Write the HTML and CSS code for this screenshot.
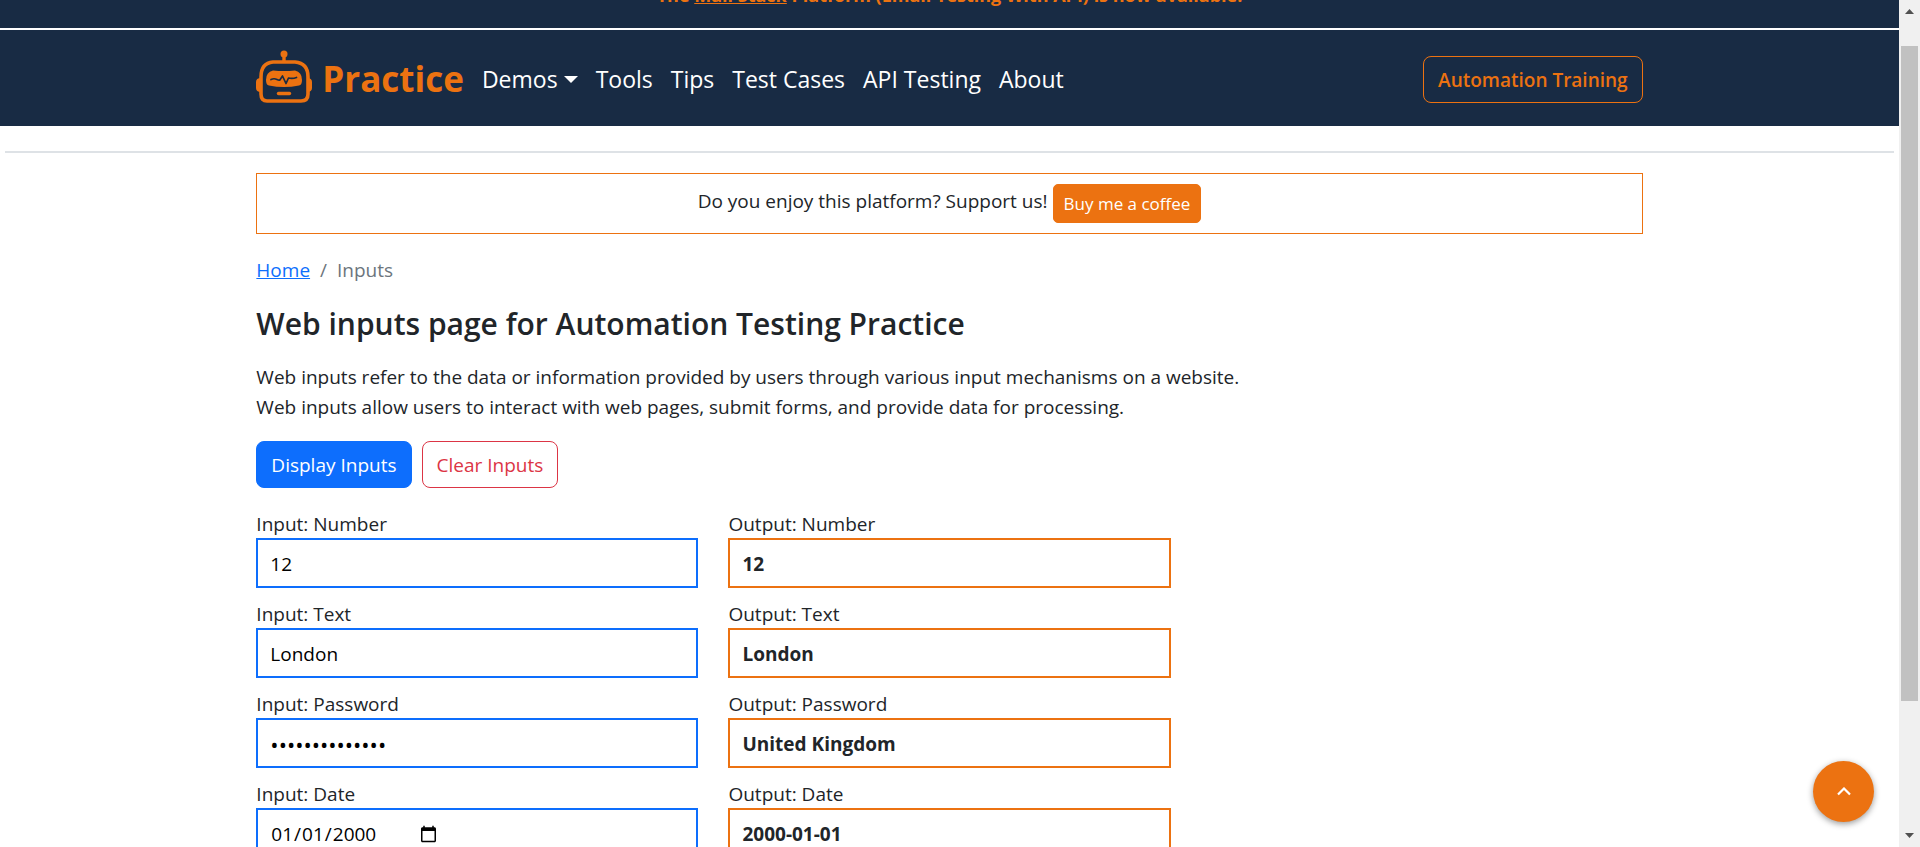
FILE: index.html
```html
<!DOCTYPE html>
<html lang="en">
<head>
<meta charset="utf-8">
<meta name="viewport" content="width=device-width, initial-scale=1">
<title>Web inputs page for Automation Testing Practice</title>
<link rel="stylesheet" href="styles.css">
</head>
<body>
<div class="window">
  <div class="page">
    <div class="banner">
      <p class="banner-text">The <a href="#">Mail Stack</a> Platform (Email Testing With API) is now available!</p>
    </div>
    <header class="navbar">
      <div class="container navbar-inner">
        <a class="brand" href="#">
          <svg class="brand-icon" viewBox="0 0 56 54" aria-hidden="true">
            <circle cx="28" cy="4" r="3.5" fill="currentColor"/>
            <path d="M28 6v7" stroke="currentColor" stroke-width="3.4"/>
            <path d="M17 12h22q13 1 13 15v17q0 7-7 7H11q-6 0-6-7V27q0-14 12-15z" fill="none" stroke="currentColor" stroke-width="3.6"/>
            <path d="M5 28q-5 0-5 4v6q0 4 5 4zM51 28q5 0 5 4v6q0 4-5 4z" fill="currentColor"/>
            <path d="M17 20.500Q28 21.500 39 20.500Q46 22 46 30Q46 35 43 35.500Q28 38.500 13 35.500Q10 35 10 30Q10 22 17 20.500z" fill="currentColor"/>
            <path d="M15 29.500q3-1.500 6 0t3.500-.500l2-3 3.500 7.500 2.500-5.500q4 1 8-.500" fill="none" stroke="#182b44" stroke-width="1.700" stroke-linejoin="round" stroke-linecap="round"/>
            <path d="M22.500 43.500h11" stroke="currentColor" stroke-width="3.400" stroke-linecap="round"/>
          </svg>
          <span>Practice</span>
        </a>
        <nav class="menu">
          <a class="dropdown" href="#">Demos</a>
          <a href="#">Tools</a>
          <a href="#">Tips</a>
          <a href="#">Test Cases</a>
          <a href="#">API Testing</a>
          <a href="#">About</a>
        </nav>
        <a class="btn btn-training" href="#">Automation Training</a>
      </div>
    </header>
    <hr class="divider">
    <main class="container">
      <div class="support">
        <span>Do you enjoy this platform? Support us!</span>
        <a class="btn btn-coffee" href="#">Buy me a coffee</a>
      </div>
      <nav class="breadcrumb" aria-label="Breadcrumb">
        <a href="#">Home</a><span>/</span><span>Inputs</span>
      </nav>
      <h1 class="title">Web inputs page for Automation Testing Practice</h1>
      <p class="intro">Web inputs refer to the data or information provided by users through various input mechanisms on a website.<br>Web inputs allow users to interact with web pages, submit forms, and provide data for processing.</p>
      <div class="actions">
        <button class="btn btn-primary" type="button">Display Inputs</button>
        <button class="btn btn-danger" type="button">Clear Inputs</button>
      </div>
      <form class="fields">
        <div class="column">
          <label for="in-number">Input: Number</label>
          <input class="box" id="in-number" type="number" value="12">
          <label for="in-text">Input: Text</label>
          <input class="box" id="in-text" type="text" value="London">
          <label for="in-password">Input: Password</label>
          <input class="box box-password" id="in-password" type="password" value="United Kingdom">
          <label for="in-date">Input: Date</label>
          <input class="box" id="in-date" type="date" value="2000-01-01">
        </div>
        <div class="column">
          <label for="out-number">Output: Number</label>
          <output class="box" id="out-number">12</output>
          <label for="out-text">Output: Text</label>
          <output class="box" id="out-text">London</output>
          <label for="out-password">Output: Password</label>
          <output class="box" id="out-password">United Kingdom</output>
          <label for="out-date">Output: Date</label>
          <output class="box" id="out-date">2000-01-01</output>
        </div>
      </form>
    </main>
  </div>
  <div class="scrollbar" aria-hidden="true">
    <svg viewBox="0 0 21 21"><path d="M6 14h9l-4.500-5z" fill="#505050"/></svg>
    <div class="track"><div class="thumb"></div></div>
    <svg viewBox="0 0 21 21"><path d="M6 7h9l-4.500 5z" fill="#505050"/></svg>
  </div>
  <button class="to-top" type="button" aria-label="Back to top">
    <svg viewBox="0 0 14 9" aria-hidden="true"><path d="M1 7.500l6-6 6 6" fill="none" stroke="#fff" stroke-width="2.200"/></svg>
  </button>
</div>
</body>
</html>
```

FILE: styles.css
```css
* { box-sizing: border-box; }

body {
  margin: 0;
  font-family: "Open Sans", "Noto Sans", sans-serif;
  font-size: 19px;
  line-height: 30px;
  color: #212529;
  background: #fff;
}

.window {
  display: flex;
  height: 100vh;
  overflow: hidden;
}

.page {
  flex: 1;
  min-width: 0;
  overflow: hidden;
}

.container {
  width: 73%;
  margin: 0 auto;
}

.banner {
  display: flex;
  align-items: flex-end;
  justify-content: center;
  height: 28px;
  padding-bottom: 18px;
  overflow: hidden;
  background: #182b44;
}

.banner-text {
  margin: 0;
  font-size: 18px;
  font-weight: 700;
  color: #ec7211;
}

.banner-text a { color: inherit; }

.navbar {
  margin-top: 2px;
  background: #182b44;
}

.navbar-inner {
  display: flex;
  align-items: center;
  height: 96px;
  padding-top: 2px;
}

.brand {
  display: flex;
  align-items: center;
  gap: 10px;
  margin-right: 18px;
  font-size: 35px;
  font-weight: 700;
  color: #ec7211;
  text-decoration: none;
}

.brand-icon {
  width: 56px;
  height: 54px;
  margin-bottom: 4px;
}

.menu {
  display: flex;
  gap: 18px;
  font-size: 23px;
}

.menu a {
  color: #fff;
  text-decoration: none;
}

.dropdown {
  display: flex;
  align-items: center;
  gap: 6px;
}

.dropdown::after {
  content: "";
  border: 7px solid transparent;
  border-top-color: #fff;
  border-bottom: 0;
}

.btn {
  display: inline-block;
  padding: 8px 14px 7px;
  border: 1px solid;
  border-radius: 8px;
  font: inherit;
  text-decoration: none;
}

.btn-training {
  margin-left: auto;
  font-weight: 600;
  color: #ec7211;
}

.divider {
  height: 2px;
  margin: 25px 5px 20px;
  border: 0;
  background: #dee2e6;
}

.support {
  display: flex;
  align-items: flex-start;
  justify-content: center;
  gap: 5px;
  padding: 10px;
  border: 1px solid #ec7211;
}

.support span { padding-top: 2px; }

.btn-coffee {
  padding: 4px 10px 3px;
  border-color: #ec7211;
  border-radius: 5px;
  font-size: 17px;
  background: #ec7211;
  color: #fff;
}

.breadcrumb {
  display: flex;
  gap: 10px;
  margin-top: 21px;
  color: #6c757d;
}

.breadcrumb a { color: #0d6efd; }

.title {
  margin: 19px 0 18px;
  font-size: 30px;
  font-weight: 600;
  line-height: 40px;
}

.intro { margin: 0 0 19px; }

.actions {
  display: flex;
  gap: 10px;
  margin-bottom: 20px;
}

.btn-primary {
  border-color: #0d6efd;
  background: #0d6efd;
  color: #fff;
}

.btn-danger {
  border-color: #dc3545;
  background: #fff;
  color: #dc3545;
}

.fields {
  display: grid;
  grid-template-columns: repeat(3, 1fr);
  gap: 30px;
}

.column {
  display: flex;
  flex-direction: column;
}

.column label {
  padding-top: 2px;
  line-height: 28px;
}

.box {
  height: 50px;
  margin-bottom: 10px;
  padding: 9px 12px 7px;
  border: 2px solid #0d6efd;
  background: #fff;
  font: inherit;
  color: #000;
}

.box-password { font-size: 22px; }

output.box {
  border-color: #ec7211;
  font-weight: 700;
  color: #212529;
}

.box::-webkit-datetime-edit { flex: 0 0 147px; }

.box::-webkit-calendar-picker-indicator { margin-left: 0; }

.scrollbar {
  display: flex;
  flex: 0 0 21px;
  flex-direction: column;
  background: #f0f0f0;
}

.track {
  flex: 1;
  padding: 25px 2px 0;
}

.thumb {
  height: 84%;
  background: #c1c1c1;
}

.to-top {
  position: fixed;
  right: 46px;
  bottom: 25px;
  display: grid;
  place-items: center;
  width: 61px;
  height: 61px;
  padding: 0;
  border: 0;
  border-radius: 50%;
  background: #ec7211;
  box-shadow: 0 2px 6px rgba(0, 0, 0, 0.4);
}

.to-top svg {
  width: 14px;
  height: 9px;
}
```
